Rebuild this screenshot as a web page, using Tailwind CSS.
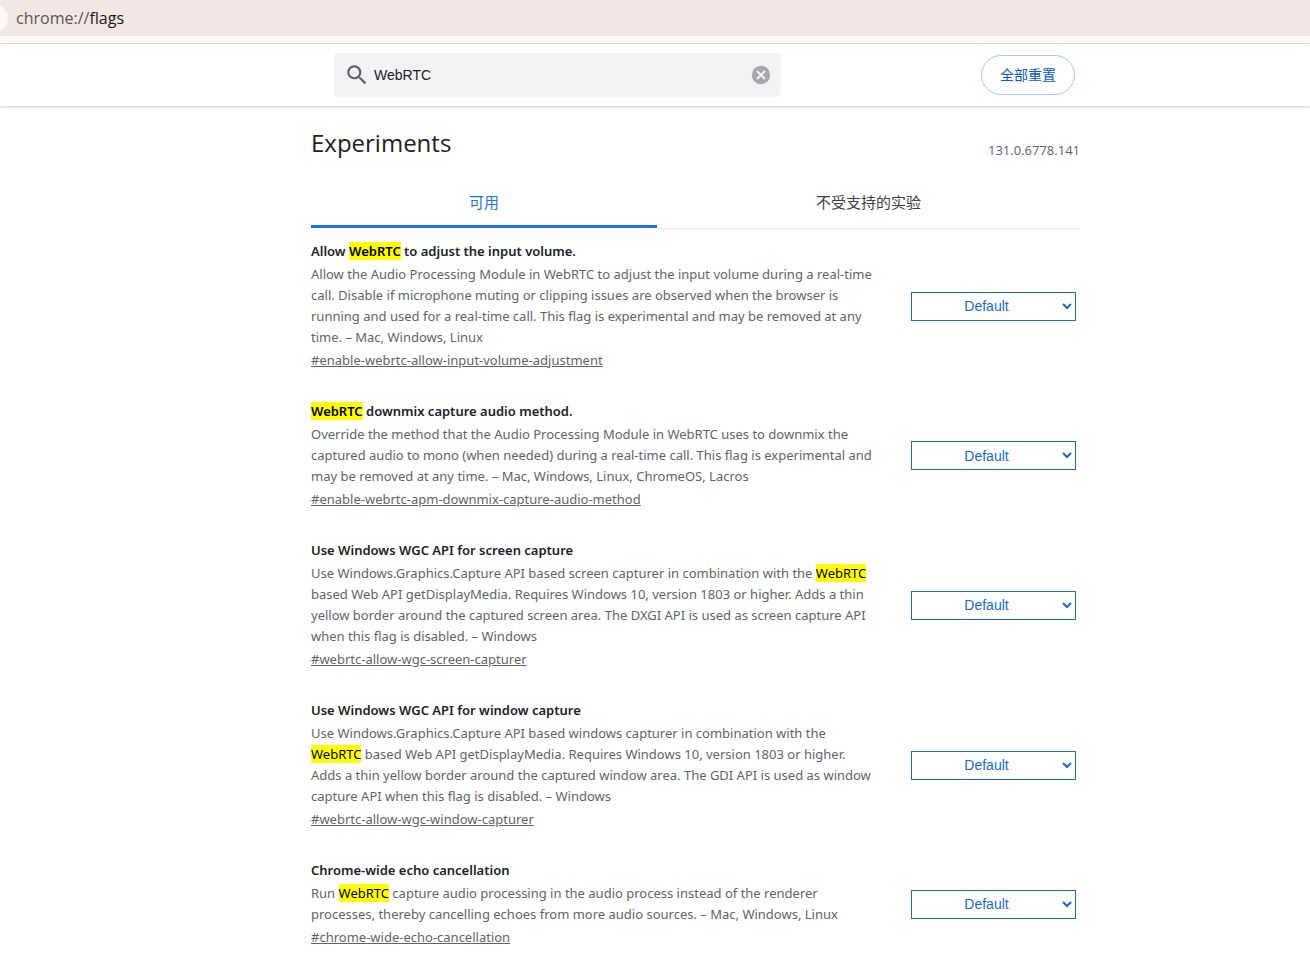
<!doctype html>
<html lang="zh-CN">
    <head>
        <meta charset="UTF-8" />
        <meta name="viewport" content="width=device-width, initial-scale=1.0" />
        <title>Experiments</title>
        <script src="https://cdn.jsdelivr.net/npm/@tailwindcss/browser@4"></script>
    </head>
    <body
        class="bg-white text-[#202124] font-['Open_Sans','Noto_Sans_CJK_SC',sans-serif]"
    >
        <!-- Address bar -->
        <div
            class="h-11 bg-[#fff8f5] border-b border-[#f0dfd6] overflow-hidden"
        >
            <div class="flex items-center h-9 bg-[#f2e7e4]">
                <span class="w-7 h-7 -ml-5 mr-2 rounded-full bg-[#fff8f5]"></span>
                <span class="text-base leading-5 text-[#5c5350]"
                    >chrome://<span class="text-[#201a18]">flags</span></span
                >
            </div>
        </div>

        <!-- Search header -->
        <header class="pl-[81px] shadow-[0_1px_3px_rgba(0,0,0,0.2)]">
            <div
                class="flex items-center justify-between max-w-[769px] h-[62px] mx-auto pl-[23px] pr-[5px]"
            >
                <label
                    class="flex items-center w-[447px] h-11 px-2 rounded-sm bg-[#f1f3f4]"
                >
                    <svg
                        class="w-[26px] h-[26px] ml-0.5 mr-1 shrink-0 fill-[#5f6368]"
                        viewBox="0 0 24 24"
                        aria-hidden="true"
                    >
                        <path
                            d="M15.5 14h-.79l-.28-.27A6.47 6.47 0 0 0 16 9.5 6.5 6.5 0 1 0 9.5 16c1.61 0 3.09-.59 4.23-1.57l.27.28v.79l5 4.99L20.49 19l-4.99-5zm-6 0C7.01 14 5 11.99 5 9.5S7.01 5 9.5 5 14 7.01 14 9.5 11.99 14 9.5 14z"
                        />
                    </svg>
                    <input
                        type="text"
                        value="WebRTC"
                        aria-label="Search flags"
                        class="flex-1 min-w-0 outline-none text-sm font-['Liberation_Sans',sans-serif]"
                    />
                    <button type="button" aria-label="Clear search">
                        <svg
                            class="w-6 h-6 fill-[#a6a9ab]"
                            viewBox="0 0 24 24"
                            aria-hidden="true"
                        >
                            <circle cx="12" cy="12" r="9.2" />
                            <path
                                d="M8 8l8 8M16 8l-8 8"
                                stroke="#f1f3f4"
                                stroke-width="2"
                            />
                        </svg>
                    </button>
                </label>
                <button
                    type="button"
                    class="h-10 px-[18px] rounded-full border border-[#a8c7fa] text-sm text-[#0b57d0]"
                >
                    全部重置
                </button>
            </div>
        </header>

        <main class="pl-[81px]">
            <div class="max-w-[769px] mx-auto pt-5">
                <div class="flex items-end justify-between h-8">
                    <h1 class="text-2xl leading-[30px]">Experiments</h1>
                    <span class="text-[13px] leading-4 text-[#5f6368]"
                        >131.0.6778.141</span
                    >
                </div>

                <div class="flex mt-[18px] text-[15px]">
                    <button
                        type="button"
                        class="w-[45%] h-[52px] pt-[3px] border-b-3 border-[#1a73e8] rounded-t-sm text-[#1a73e8]"
                    >
                        可用
                    </button>
                    <button
                        type="button"
                        class="w-[55%] h-[53px] border-b border-[#e8eaed] text-[#3c4043]"
                    >
                        不受支持的实验
                    </button>
                </div>

                <div
                    class="flex flex-col gap-[30px] pt-3 font-['Noto_Sans',sans-serif] text-[13px] leading-[21px] text-[#5f6368]"
                >
                    <section class="flex items-center justify-between pr-1">
                        <div class="w-[588px]">
                            <h2 class="font-semibold text-[#202124]">
                                Allow
                                <mark class="bg-[#ff0] text-black">WebRTC</mark>
                                to adjust the input volume.
                            </h2>
                            <p class="my-0.5">
                                Allow the Audio Processing Module in WebRTC to adjust the input volume during a real-time<br />
                                call. Disable if microphone muting or clipping issues are observed when the browser is<br />
                                running and used for a real-time call. This flag is experimental and may be removed at any<br />
                                time. – Mac, Windows, Linux
                            </p>
                            <a class="block underline" href="#enable-webrtc-allow-input-volume-adjustment"
                                >#enable-webrtc-allow-input-volume-adjustment</a
                            >
                        </div>
                        <select
                            aria-label="Allow WebRTC to adjust the input volume."
                            class="w-[165px] h-[29px] pr-0.5 border border-[#1967d2] text-center text-sm text-[#1967d2] font-['Liberation_Sans',sans-serif]"
                        >
                            <option>Default</option>
                            <option>Enabled</option>
                            <option>Disabled</option>
                        </select>
                    </section>

                    <section class="flex items-center justify-between pr-1">
                        <div class="w-[588px]">
                            <h2 class="font-semibold text-[#202124]">
                                <mark class="bg-[#ff0] text-black">WebRTC</mark>
                                downmix capture audio method.
                            </h2>
                            <p class="my-0.5">
                                Override the method that the Audio Processing Module in WebRTC uses to downmix the<br />
                                captured audio to mono (when needed) during a real-time call. This flag is experimental and<br />
                                may be removed at any time. – Mac, Windows, Linux, ChromeOS, Lacros
                            </p>
                            <a class="block underline" href="#enable-webrtc-apm-downmix-capture-audio-method"
                                >#enable-webrtc-apm-downmix-capture-audio-method</a
                            >
                        </div>
                        <select
                            aria-label="WebRTC downmix capture audio method."
                            class="w-[165px] h-[29px] pr-0.5 border border-[#1967d2] text-center text-sm text-[#1967d2] font-['Liberation_Sans',sans-serif]"
                        >
                            <option>Default</option>
                            <option>Enabled</option>
                            <option>Disabled</option>
                        </select>
                    </section>

                    <section class="flex items-center justify-between pr-1">
                        <div class="w-[588px]">
                            <h2 class="font-semibold text-[#202124]">
                                Use Windows WGC API for screen capture
                            </h2>
                            <p class="my-0.5">
                                Use Windows.Graphics.Capture API based screen capturer in combination with the
                                <mark class="bg-[#ff0] text-black">WebRTC</mark><br />
                                based Web API getDisplayMedia. Requires Windows 10, version 1803 or higher. Adds a thin<br />
                                yellow border around the captured screen area. The DXGI API is used as screen capture API<br />
                                when this flag is disabled. – Windows
                            </p>
                            <a class="block underline" href="#webrtc-allow-wgc-screen-capturer"
                                >#webrtc-allow-wgc-screen-capturer</a
                            >
                        </div>
                        <select
                            aria-label="Use Windows WGC API for screen capture"
                            class="w-[165px] h-[29px] pr-0.5 border border-[#1967d2] text-center text-sm text-[#1967d2] font-['Liberation_Sans',sans-serif]"
                        >
                            <option>Default</option>
                            <option>Enabled</option>
                            <option>Disabled</option>
                        </select>
                    </section>

                    <section class="flex items-center justify-between pr-1">
                        <div class="w-[588px]">
                            <h2 class="font-semibold text-[#202124]">
                                Use Windows WGC API for window capture
                            </h2>
                            <p class="my-0.5">
                                Use Windows.Graphics.Capture API based windows capturer in combination with the<br />
                                <mark class="bg-[#ff0] text-black">WebRTC</mark>
                                based Web API getDisplayMedia. Requires Windows 10, version 1803 or higher.<br />
                                Adds a thin yellow border around the captured window area. The GDI API is used as window<br />
                                capture API when this flag is disabled. – Windows
                            </p>
                            <a class="block underline" href="#webrtc-allow-wgc-window-capturer"
                                >#webrtc-allow-wgc-window-capturer</a
                            >
                        </div>
                        <select
                            aria-label="Use Windows WGC API for window capture"
                            class="w-[165px] h-[29px] pr-0.5 border border-[#1967d2] text-center text-sm text-[#1967d2] font-['Liberation_Sans',sans-serif]"
                        >
                            <option>Default</option>
                            <option>Enabled</option>
                            <option>Disabled</option>
                        </select>
                    </section>

                    <section class="flex items-center justify-between pr-1">
                        <div class="w-[588px]">
                            <h2 class="font-semibold text-[#202124]">
                                Chrome-wide echo cancellation
                            </h2>
                            <p class="my-0.5">
                                Run
                                <mark class="bg-[#ff0] text-black">WebRTC</mark>
                                capture audio processing in the audio process instead of the renderer<br />
                                processes, thereby cancelling echoes from more audio sources. – Mac, Windows, Linux
                            </p>
                            <a class="block underline" href="#chrome-wide-echo-cancellation"
                                >#chrome-wide-echo-cancellation</a
                            >
                        </div>
                        <select
                            aria-label="Chrome-wide echo cancellation"
                            class="w-[165px] h-[29px] pr-0.5 border border-[#1967d2] text-center text-sm text-[#1967d2] font-['Liberation_Sans',sans-serif]"
                        >
                            <option>Default</option>
                            <option>Enabled</option>
                            <option>Disabled</option>
                        </select>
                    </section>
                </div>
            </div>
        </main>
    </body>
</html>
